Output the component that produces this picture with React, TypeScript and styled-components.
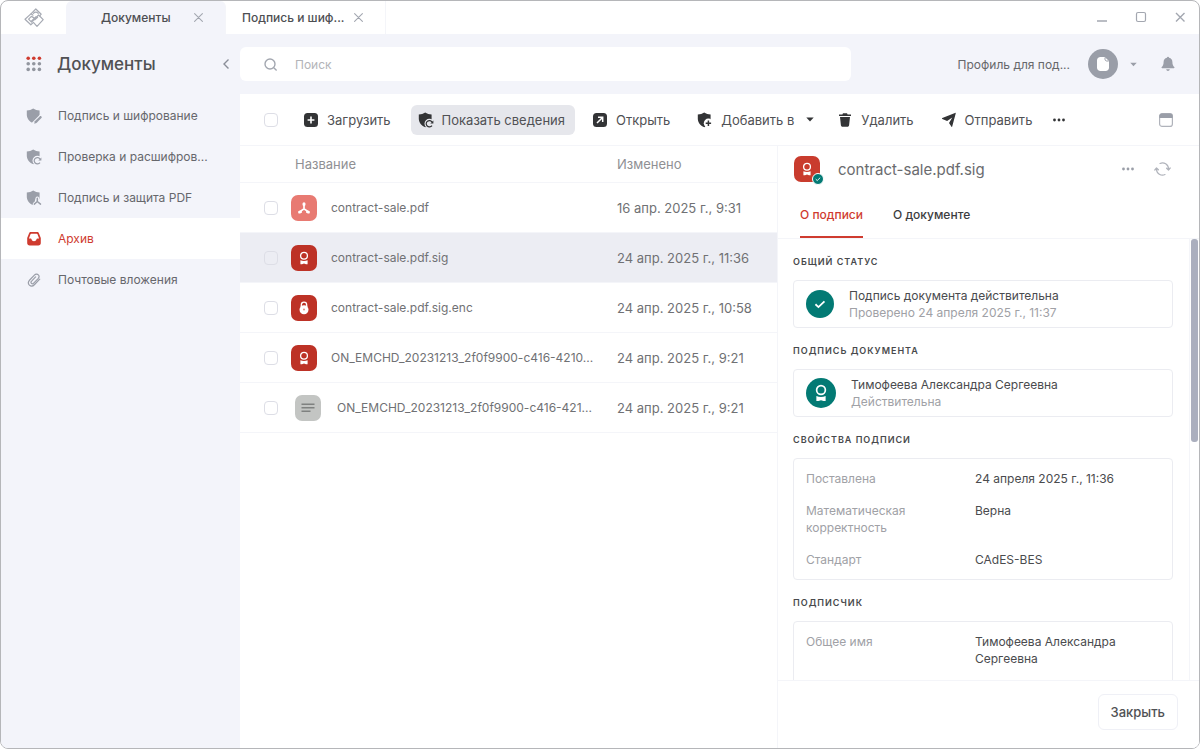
import React, { useState } from "react";
import styled, { createGlobalStyle, css } from "styled-components";

const red = "#cf3b2f";
const teal = "#037a74";
const lav = "#f3f4fa";
const line = "#f4f5f9";

const Global = createGlobalStyle`
  *, *::before, *::after { box-sizing: border-box; }
  body { margin: 0; background: #fff; }
  body, button, input { font-family: Inter, "Liberation Sans", sans-serif; font-size: 12px; }
  button { border: 0; padding: 0; margin: 0; background: none; color: inherit; cursor: pointer; }
  svg { display: block; flex: none; }
`;

const Frame = styled.div`
  display: flex;
  flex-direction: column;
  height: 100vh;
  border: 1px solid #b5b6b9;
  border-radius: 8px;
  background: #fff;
  color: #636466;
  overflow: hidden;
`;

const TitleBar = styled.header`
  display: flex;
  flex: none;
  height: 33px;
`;

const HomeButton = styled.button`
  width: 65px;
  display: grid;
  place-items: center;
  color: #a7abb4;
`;

const WindowTab = styled.div<{ $active?: boolean }>`
  display: flex;
  align-items: center;
  width: 160px;
  padding: 0 22px 0 ${(p) => (p.$active ? 35 : 16)}px;
  border-right: 1px solid ${line};
  border-radius: ${(p) => (p.$active ? "6px 6px 0 0" : "0")};
  background: ${(p) => (p.$active ? lav : "#fff")};
  color: #4d4e52;
`;

const TabTitle = styled.button`
  flex: 1;
  text-align: left;
  white-space: nowrap;
  font-weight: 500;
`;

const PlainButton = styled.button`
  display: grid;
  place-items: center;
  color: #a3a7b0;
`;

const WindowControls = styled.div`
  display: flex;
  align-items: center;
  gap: 27px;
  margin-left: auto;
  padding: 0 13px 2px 0;
`;

const Body = styled.div`
  display: flex;
  flex: 1;
  min-height: 0;
  background: ${lav};
`;

const Sidebar = styled.nav`
  width: 239px;
  flex: none;
`;

const SideHeader = styled.div`
  display: flex;
  align-items: center;
  height: 60px;
  padding: 0 10px 0 25px;
`;

const AppTitle = styled.h1`
  flex: 1;
  margin: 0 0 0 15px;
  font-size: 17px;
  font-weight: 500;
  color: #505154;
`;

const SideList = styled.ul`
  margin: 0;
  padding: 1px 0 0;
  list-style: none;
`;

const SideLink = styled.a<{ $active?: boolean }>`
  display: flex;
  align-items: center;
  gap: 16px;
  height: 41px;
  padding-left: 25px;
  text-decoration: none;
  white-space: nowrap;
  color: ${(p) => (p.$active ? red : "#66676c")};
  background: ${(p) => (p.$active ? "#fff" : "transparent")};
  svg { color: ${(p) => (p.$active ? red : "#9a9ea8")}; }
`;

const Content = styled.div`
  display: flex;
  flex-direction: column;
  flex: 1;
  min-width: 0;
`;

const TopBar = styled.div`
  display: flex;
  align-items: center;
  flex: none;
  height: 60px;
  padding-right: 24px;
`;

const SearchBox = styled.label`
  display: flex;
  align-items: center;
  gap: 14px;
  flex: 1;
  max-width: 611px;
  height: 34px;
  padding-left: 24px;
  border-radius: 6px;
  background: #fff;
  color: #a3a7b0;
`;

const SearchInput = styled.input`
  flex: 1;
  border: 0;
  outline: 0;
  background: none;
  color: #505154;
  &::placeholder { color: #b3b4b8; }
`;

const Profile = styled.button`
  display: flex;
  align-items: center;
  margin-left: auto;
  white-space: nowrap;
  color: #66676a;
`;

const Avatar = styled.span`
  display: grid;
  place-items: center;
  width: 30px;
  height: 30px;
  margin: 0 12px 0 18px;
  border-radius: 50%;
  background: #9a9ea8;
`;

const BellButton = styled(PlainButton)`
  margin-left: 24px;
`;

const Sheet = styled.main`
  display: flex;
  flex-direction: column;
  flex: 1;
  min-height: 0;
  background: #fff;
`;

const Toolbar = styled.div`
  display: flex;
  align-items: center;
  gap: 10px;
  flex: none;
  height: 52px;
  padding: 0 26px 0 24px;
  border-bottom: 1px solid ${line};
`;

const Check = styled.input`
  appearance: none;
  display: block;
  flex: none;
  width: 14px;
  height: 14px;
  margin: 0;
  border: 1px solid #dddee6;
  border-radius: 4px;
  &:checked { background: ${red}; }
`;

const SelectAll = styled(Check)`
  margin-right: 8px;
`;

const ToolButton = styled.button<{ $active?: boolean; $menu?: boolean }>`
  display: flex;
  align-items: center;
  gap: 8px;
  height: 30px;
  padding: 0 ${(p) => (p.$menu ? 6 : 10)}px 0 7px;
  border-radius: 6px;
  white-space: nowrap;
  font-size: 13px;
  color: #505154;
  background: ${(p) => (p.$active ? "#e6e7ec" : "transparent")};
  svg { color: #333436; }
`;

const MenuLabel = styled.span`
  margin-right: 4px;
`;

const LayoutButton = styled(PlainButton)`
  margin-left: auto;
`;

const Split = styled.div`
  display: flex;
  flex: 1;
  min-height: 0;
`;

const FileArea = styled.section`
  flex: 1;
  min-width: 0;
`;

const FileTable = styled.table`
  width: 100%;
  table-layout: fixed;
  border-collapse: separate;
  border-spacing: 0;
  th, td {
    padding: 0;
    text-align: left;
    font-size: 13px;
    font-weight: 400;
    white-space: nowrap;
    border-bottom: 1px solid ${line};
  }
  th { height: 37px; color: #8f9094; }
  td { height: 50px; color: #707174; }
`;

const CheckCol = styled.col`width: 51px;`;
const DateCol = styled.col`width: 160px;`;

const FileRow = styled.tr<{ $selected?: boolean }>`
  background: ${(p) => (p.$selected ? "#ecedf3" : "#fff")};
`;

const CheckCell = styled.td`
  && { padding-left: 24px; }
`;

const NameHead = styled.th`
  && { padding-left: 4px; }
`;

const FileName = styled.div<{ $nested?: boolean }>`
  display: flex;
  align-items: center;
  gap: ${(p) => (p.$nested ? 16 : 14)}px;
  padding-left: ${(p) => (p.$nested ? 4 : 0)}px;
  font-size: 12px;
`;

const Tile = styled.span<{ $tone: string }>`
  position: relative;
  display: grid;
  place-items: center;
  flex: none;
  width: 26px;
  height: 26px;
  border-radius: 7px;
  background: ${(p) => p.$tone};
  color: #fff;
`;

const Panel = styled.aside`
  display: flex;
  flex-direction: column;
  flex: none;
  width: 422px;
  border-left: 1px solid ${line};
`;

const PanelHeader = styled.div`
  display: flex;
  align-items: center;
  height: 46px;
  padding: 0 28px 0 16px;
`;

const PanelTitle = styled.h2`
  flex: 1;
  margin: 0 0 0 18px;
  font-size: 15px;
  font-weight: 400;
  color: #6a6b6e;
`;

const OkBadge = styled.span`
  position: absolute;
  right: -4px;
  bottom: -3px;
  display: grid;
  place-items: center;
  width: 12px;
  height: 12px;
  border: 1px solid #fff;
  border-radius: 50%;
  background: ${teal};
`;

const PanelActions = styled.div`
  display: flex;
  align-items: center;
  gap: 19px;
`;

const PanelTabs = styled.div`
  display: flex;
  gap: 30px;
  height: 47px;
  padding-left: 22px;
  border-bottom: 1px solid ${line};
`;

const PanelTab = styled.button<{ $active?: boolean }>`
  font-weight: 500;
  color: ${(p) => (p.$active ? red : "#3c3d40")};
  border-bottom: 2px solid ${(p) => (p.$active ? red : "transparent")};
`;

const ScrollArea = styled.div`
  display: flex;
  flex: 1;
  min-height: 0;
`;

const Details = styled.div`
  flex: 1;
  padding: 0 16px 0 15px;
  overflow-y: auto;
  scrollbar-width: none;
`;

const Track = styled.div`
  width: 10px;
  padding: 0 1px;
  border-left: 1px solid ${line};
`;

const Thumb = styled.div`
  height: 46%;
  border-radius: 3px;
  background: #abafbe;
`;

const SectionTitle = styled.h3`
  display: flex;
  align-items: center;
  height: 41px;
  margin: 0;
  padding-top: 3px;
  font-size: 9px;
  font-weight: 600;
  letter-spacing: 1px;
  text-transform: uppercase;
  color: #48494c;
`;

const cardFrame = css`
  border: 1px solid #ebecf1;
  border-radius: 4px;
`;

const StatusCard = styled.div`
  display: flex;
  align-items: center;
  gap: 15px;
  height: 48px;
  padding: 0 12px;
  ${cardFrame}
`;

const Seal = styled.span<{ $size: number }>`
  display: grid;
  place-items: center;
  width: ${(p) => p.$size}px;
  height: ${(p) => p.$size}px;
  border-radius: 50%;
  background: ${teal};
  color: #fff;
`;

const StatusText = styled.p`
  margin: 0;
  line-height: 17px;
  color: #4a4b4e;
`;

const Muted = styled.span`
  display: block;
  color: #a0a1a6;
`;

const Properties = styled.dl`
  display: grid;
  grid-template-columns: 154px 1fr;
  gap: 15px;
  align-content: start;
  min-height: 122px;
  margin: 0;
  padding: 11px 12px;
  line-height: 17px;
  ${cardFrame}
  dt { color: #a0a1a6; }
  dd { margin: 0; color: #4a4b4e; }
`;

const PanelFooter = styled.div`
  display: flex;
  justify-content: flex-end;
  flex: none;
  height: 68px;
  padding: 13px 21px 0;
  border-top: 1px solid ${line};
`;

const CloseButton = styled.button`
  height: 36px;
  padding: 0 12px;
  border: 1px solid #eff0f6;
  border-radius: 6px;
  font-size: 13px;
  font-weight: 500;
  color: #505154;
`;

const CloseIcon = () => (
  <svg width="9" height="9" viewBox="0 0 9 9" stroke="currentColor" strokeWidth="1.1" strokeLinecap="round">
    <path d="M.6.6l7.800 7.800M8.400.6.6 8.400" />
  </svg>
);

const LogoIcon = () => (
  <svg width="20" height="20" viewBox="0 0 20 20" fill="none" stroke="currentColor" strokeWidth="1.200" strokeLinejoin="round" strokeLinecap="round">
    <path d="M9 7.200 7.200 5.600 1 11.200l5.800 5.600 2.400-2.200" />
    <path d="M9.600 9.600 7.400 8.400 4.600 11.200l2.400 2.400 5-4.800" />
    <path d="M9.400 14.400l3.600 4 6.200-6.800-4.600-4.600-7 7" />
    <path d="M13.600 9.200l-2.800 2.600" />
    <path d="M7.200 5.600 11.800 1l5.400 5.200-1.400 1.600M9.400 5.400c1.600-1.600 3.400-1.400 4.800 0" />
  </svg>
);

const DotsGrid = () => (
  <svg width="16" height="16" viewBox="0 0 16 16">
    {[2.2, 7.8, 13.4].map((y, r) =>
      [2.2, 7.8, 13.4].map((x) => <circle key={`${x}-${y}`} cx={x} cy={y} r="1.8" fill={r ? "#92969f" : red} />)
    )}
  </svg>
);

const Shield = ({ kind, bg }: { kind: "pen" | "check" | "pdf" | "plus"; bg: string }) => (
  <svg width="16" height="16" viewBox="0 0 16 16" fill="none">
    <path d="M7.200.4c1.900 1.300 4 1.900 6.400 2v4.300c0 3.600-2.500 6.900-6.400 8.500C3.200 13.600.8 10.300.8 6.700V2.400C3.200 2.300 5.400 1.700 7.200.4z" fill="currentColor" />
    {kind === "pen" && (
      <>
        <path d="M16 8 7.500 16.500" stroke={bg} strokeWidth="4.600" />
        <path d="M8.200 15.800l.6-2.500 4.900-4.900c.5-.5 1.200-.5 1.700 0s.5 1.200 0 1.700l-4.900 4.900z" fill="currentColor" />
      </>
    )}
    {kind === "check" && (
      <>
        <circle cx="11.400" cy="11.600" r="4.900" fill={bg} />
        <path d="M14 13.600a3.200 3.200 0 1 1 .2-3.400" stroke="currentColor" strokeWidth="1.200" />
        <path d="M15.400 8.400v3.100h-3.100z" fill="currentColor" />
      </>
    )}
    {kind === "pdf" && (
      <>
        <path d="M11.200 6.500c2 0 2.200 1.800 1.600 3.400 1.600 2 3.200 2.200 3.200 4.600L8 16c-2-.5-1.600-3.300.6-4.300.8-1.500.5-5.200 2.600-5.200z" fill={bg} />
        <path d="M11.300 8.300v3.200M11.300 11.500l-3 2.600M11.300 11.500l3.200 2.600" stroke="currentColor" strokeWidth="1.500" strokeLinecap="round" />
      </>
    )}
    {kind === "plus" && (
      <>
        <circle cx="11.400" cy="11.200" r="4.600" fill={bg} />
        <path d="M11.400 8.500v5.400M8.700 11.200h5.400" stroke="currentColor" strokeWidth="1.500" />
      </>
    )}
  </svg>
);

const InboxIcon = () => (
  <svg width="16" height="16" viewBox="0 0 16 16" fill="none">
    <path d="M5 1h6c1 0 1.600.5 2 1.400L14.800 7v5c0 1.500-1 2.500-2.500 2.500H3.700c-1.500 0-2.500-1-2.500-2.500V7L3 2.400C3.400 1.500 4 1 5 1z" fill="currentColor" />
    <path d="M5.300 2.700h5.400c.4 0 .6.200.8.600l1.600 4.300h-1.500c-.7 0-1 .4-1.200 1-.3 1-1.100 1.700-2.400 1.700s-2.100-.7-2.400-1.700c-.2-.6-.5-1-1.200-1H2.900l1.600-4.300c.2-.4.400-.6.800-.6z" fill="#fff" />
  </svg>
);

const ClipIcon = () => (
  <svg width="16" height="16" viewBox="0 0 16 16" fill="none" stroke="currentColor" strokeWidth="1.200" strokeLinecap="round">
    <path d="M13.700 7.200 8.600 12.500c-1.600 1.700-3.800 1.900-5.200.6-1.400-1.400-1.200-3.500.3-5.100l4.700-4.900c1.200-1.200 2.900-1.300 3.900-.3s.9 2.600-.2 3.800L7.700 11.100c-.7.7-1.700.8-2.300.2s-.5-1.500.2-2.200l4-4.200" />
  </svg>
);

const RibbonIcon = ({ size = 14 }: { size?: number }) => (
  <svg width={size} height={size} viewBox="0 0 14 14" fill="none">
    <circle cx="7" cy="4.700" r="3.400" stroke="currentColor" strokeWidth="1.300" />
    <path d="M3.400 9.300c2.200 1 5 1 7.200 0v4H9L7 12.600l-2 .7H3.400z" fill="currentColor" />
  </svg>
);

const LockIcon = () => (
  <svg width="14" height="14" viewBox="0 0 14 14" fill="none">
    <path d="M4.300 6V3.900a2.700 2.700 0 0 1 5.400 0V6" stroke="currentColor" strokeWidth="1.300" />
    <circle cx="7" cy="8.700" r="4.500" fill="currentColor" />
    <circle cx="7" cy="8.500" r="1" fill="#e0887f" />
  </svg>
);

const PdfIcon = () => (
  <svg width="14" height="14" viewBox="0 0 14 14" fill="none" stroke="currentColor" strokeLinecap="round">
    <path d="M7 3v4.800M7 7.800l-4 2.800M7 7.800l4 2.800" strokeWidth="1.700" />
    <path d="M7 2.700v.8M2.600 11.100l.9-.2M11.400 11.100l-.9-.2" strokeWidth="3" />
  </svg>
);

const TextIcon = () => (
  <svg width="14" height="12" viewBox="0 0 14 12" stroke="#7f8180" strokeWidth="1.500">
    <path d="M.5 2.200h13M.5 5.700h13M.5 9.300h9" />
  </svg>
);

const CheckMark = ({ size }: { size: number }) => (
  <svg width={size} height={size} viewBox="0 0 10 10" fill="none" stroke="#fff" strokeWidth="1.500">
    <path d="M1.200 5.200l2.500 2.400 5-4.800" />
  </svg>
);

const PlusSquare = () => (
  <svg width="16" height="16" viewBox="0 0 16 16">
    <rect x="1" y="1" width="14" height="14" rx="3.500" fill="currentColor" />
    <path d="M8 4.600v6.800M4.600 8h6.800" stroke="#fff" strokeWidth="1.600" />
  </svg>
);

const OpenSquare = () => (
  <svg width="16" height="16" viewBox="0 0 16 16" fill="none">
    <rect x="1" y="1" width="14" height="14" rx="3.500" fill="currentColor" />
    <path d="M5 11l5.500-5.500M6 5.300h4.700V10" stroke="#fff" strokeWidth="1.500" />
  </svg>
);

const TrashIcon = () => (
  <svg width="16" height="16" viewBox="0 0 16 16" fill="currentColor">
    <path d="M6 1.200h4l.6 1.200H14v1.500H2V2.400h3.400zM3 5h10l-.9 8.200c-.1.900-.8 1.500-1.700 1.500H5.600c-.9 0-1.600-.6-1.700-1.500z" />
  </svg>
);

const SendIcon = () => (
  <svg width="16" height="16" viewBox="0 0 16 16" fill="currentColor">
    <path d="M14.700 1.400 11.200 14.600c-.1.400-.5.400-.7.100L8 10.900l3.300-5.300-5.200 3.500L1.300 7c-.5-.2-.4-.7 0-.9L14 .9c.5-.2.900.1.700.5z" />
  </svg>
);

const Caret = ({ size, color }: { size: number; color: string }) => (
  <svg width={size} height="5" viewBox="0 0 8 5"><path d="M.3.500h7.400L4 4.500z" fill={color} /></svg>
);

const MoreIcon = ({ color }: { color: string }) => (
  <svg width="14" height="4" viewBox="0 0 14 4" fill={color}>
    <circle cx="2.500" cy="2" r="1.400" /><circle cx="7" cy="2" r="1.400" /><circle cx="11.500" cy="2" r="1.400" />
  </svg>
);

const BellIcon = () => (
  <svg width="14" height="16" viewBox="0 0 14 16" fill="#9a9ea8">
    <path d="M7 .7c.6 0 1 .4 1.100 1 2.100.5 3.300 2.100 3.300 4.300 0 2.600.7 4 1.900 5.100.4.500.2 1.200-.5 1.200H1.200c-.7 0-.9-.7-.5-1.200C1.900 10 2.600 8.600 2.600 6c0-2.200 1.200-3.800 3.300-4.300.1-.6.5-1 1.100-1zM5.200 13.300h3.600c-.2 1-.9 1.600-1.800 1.600s-1.600-.6-1.800-1.600z" />
  </svg>
);

const RefreshIcon = () => (
  <svg width="17" height="16" viewBox="0 0 17 16" fill="none" stroke="#b0b3bb" strokeWidth="1.200" strokeLinecap="round" strokeLinejoin="round">
    <path d="M6 2.500a6 6 0 0 1 8.500 5.300v1M16.200 7l-1.700 2-1.900-1.800" />
    <path d="M11 13.500A6 6 0 0 1 2.500 8.200v-1M.8 9l1.700-2 1.900 1.800" />
  </svg>
);

const sideItems = [
  { label: "Подпись и шифрование", icon: <Shield kind="pen" bg={lav} /> },
  { label: "Проверка и расшифров...", icon: <Shield kind="check" bg={lav} /> },
  { label: "Подпись и защита PDF", icon: <Shield kind="pdf" bg={lav} /> },
  { label: "Архив", icon: <InboxIcon />, active: true },
  { label: "Почтовые вложения", icon: <ClipIcon /> },
];

const files = [
  { name: "contract-sale.pdf", date: "16 апр. 2025 г., 9:31", tone: "#e87a72", icon: <PdfIcon /> },
  { name: "contract-sale.pdf.sig", date: "24 апр. 2025 г., 11:36", tone: "#bd3226", icon: <RibbonIcon />, selected: true },
  { name: "contract-sale.pdf.sig.enc", date: "24 апр. 2025 г., 10:58", tone: "#bd3226", icon: <LockIcon /> },
  { name: "ON_EMCHD_20231213_2f0f9900-c416-4210...", date: "24 апр. 2025 г., 9:21", tone: "#bd3226", icon: <RibbonIcon /> },
  { name: "ON_EMCHD_20231213_2f0f9900-c416-421...", date: "24 апр. 2025 г., 9:21", tone: "#c3c5c3", icon: <TextIcon />, nested: true },
];

const panelTabs = ["О подписи", "О документе"];

export default function App() {
  const [tab, setTab] = useState(0);
  return (
    <Frame>
      <Global />
      <TitleBar>
        <HomeButton aria-label="Главная"><LogoIcon /></HomeButton>
        <WindowTab $active>
          <TabTitle>Документы</TabTitle>
          <PlainButton aria-label="Закрыть вкладку"><CloseIcon /></PlainButton>
        </WindowTab>
        <WindowTab>
          <TabTitle>Подпись и шиф...</TabTitle>
          <PlainButton aria-label="Закрыть вкладку"><CloseIcon /></PlainButton>
        </WindowTab>
        <WindowControls>
          <PlainButton aria-label="Свернуть">
            <svg width="12" height="12" viewBox="0 0 12 12" stroke="currentColor" strokeWidth="1.500"><path d="M1 10h10" /></svg>
          </PlainButton>
          <PlainButton aria-label="Развернуть">
            <svg width="12" height="12" viewBox="0 0 12 12" fill="none" stroke="currentColor" strokeWidth="1.200"><rect x="1.500" y="1.500" width="9" height="9" rx="1.500" /></svg>
          </PlainButton>
          <PlainButton aria-label="Закрыть окно">
            <svg width="12" height="12" viewBox="0 0 12 12" stroke="currentColor" strokeWidth="1.400"><path d="M2 2l8.500 8.500M10.500 2L2 10.500" /></svg>
          </PlainButton>
        </WindowControls>
      </TitleBar>

      <Body>
        <Sidebar>
          <SideHeader>
            <DotsGrid />
            <AppTitle>Документы</AppTitle>
            <PlainButton aria-label="Свернуть меню">
              <svg width="8" height="12" viewBox="0 0 8 12" fill="none" stroke="#8a8e98" strokeWidth="1.400"><path d="M6.500 1.500 2 6l4.500 4.500" /></svg>
            </PlainButton>
          </SideHeader>
          <SideList>
            {sideItems.map((it) => (
              <li key={it.label}>
                <SideLink href="#" $active={it.active}>{it.icon}{it.label}</SideLink>
              </li>
            ))}
          </SideList>
        </Sidebar>

        <Content>
          <TopBar>
            <SearchBox>
              <svg width="15" height="15" viewBox="0 0 15 15" fill="none" stroke="currentColor" strokeWidth="1.400">
                <circle cx="6" cy="7" r="5" /><path d="M9.800 10.800l2.800 2.600" />
              </svg>
              <SearchInput type="search" placeholder="Поиск" aria-label="Поиск" />
            </SearchBox>
            <Profile>
              Профиль для под...
              <Avatar>
                <svg width="14" height="16" viewBox="0 0 14 16">
                  <path d="M4.500 1h4.200L13 5v6.500c0 2-1.400 3.500-3.500 3.500h-5C2.400 15 1 13.500 1 11.500v-7C1 2.400 2.400 1 4.500 1z" fill="#fff" />
                  <path d="M9 1.500v1.700C9 4.200 9.700 5 10.700 5h2" fill="none" stroke="#9a9ea8" />
                </svg>
              </Avatar>
              <Caret size={7} color="#9a9ea8" />
            </Profile>
            <BellButton aria-label="Уведомления"><BellIcon /></BellButton>
          </TopBar>

          <Sheet>
            <Toolbar>
              <SelectAll type="checkbox" aria-label="Выбрать все" />
              <ToolButton><PlusSquare />Загрузить</ToolButton>
              <ToolButton $active><Shield kind="check" bg="#e6e7ec" />Показать сведения</ToolButton>
              <ToolButton><OpenSquare />Открыть</ToolButton>
              <ToolButton $menu><Shield kind="plus" bg="#fff" /><MenuLabel>Добавить в</MenuLabel><Caret size={8} color="#333436" /></ToolButton>
              <ToolButton><TrashIcon />Удалить</ToolButton>
              <ToolButton><SendIcon />Отправить</ToolButton>
              <PlainButton aria-label="Ещё"><MoreIcon color="#333436" /></PlainButton>
              <LayoutButton aria-label="Вид">
                <svg width="14" height="14" viewBox="0 0 14 14" fill="none">
                  <rect x=".6" y=".6" width="12.800" height="12.800" rx="2.500" stroke="#b0b3bb" strokeWidth="1.200" />
                  <path d="M.4 5V3A2.600 2.600 0 0 1 3 .4h8A2.600 2.600 0 0 1 13.600 3v2z" fill="#9a9ea8" />
                </svg>
              </LayoutButton>
            </Toolbar>

            <Split>
              <FileArea>
                <FileTable>
                  <colgroup><CheckCol /><col /><DateCol /></colgroup>
                  <thead>
                    <tr><th aria-label="Выбор" /><NameHead>Название</NameHead><th>Изменено</th></tr>
                  </thead>
                  <tbody>
                    {files.map((f, i) => (
                      <FileRow key={i} $selected={f.selected}>
                        <CheckCell><Check type="checkbox" aria-label={f.name} /></CheckCell>
                        <td><FileName $nested={f.nested}><Tile $tone={f.tone}>{f.icon}</Tile>{f.name}</FileName></td>
                        <td>{f.date}</td>
                      </FileRow>
                    ))}
                  </tbody>
                </FileTable>
              </FileArea>

              <Panel>
                <PanelHeader>
                  <Tile $tone="#c93c2e">
                    <RibbonIcon />
                    <OkBadge><CheckMark size={6} /></OkBadge>
                  </Tile>
                  <PanelTitle>contract-sale.pdf.sig</PanelTitle>
                  <PanelActions>
                    <PlainButton aria-label="Действия"><MoreIcon color="#9a9ea8" /></PlainButton>
                    <PlainButton aria-label="Обновить"><RefreshIcon /></PlainButton>
                  </PanelActions>
                </PanelHeader>
                <PanelTabs>
                  {panelTabs.map((t, i) => (
                    <PanelTab key={t} $active={tab === i} onClick={() => setTab(i)}>{t}</PanelTab>
                  ))}
                </PanelTabs>
                <ScrollArea>
                  <Details>
                    <SectionTitle>Общий статус</SectionTitle>
                    <StatusCard>
                      <Seal $size={28}><CheckMark size={12} /></Seal>
                      <StatusText>Подпись документа действительна<Muted>Проверено 24 апреля 2025 г., 11:37</Muted></StatusText>
                    </StatusCard>
                    <SectionTitle>Подпись документа</SectionTitle>
                    <StatusCard>
                      <Seal $size={30}><RibbonIcon size={18} /></Seal>
                      <StatusText>Тимофеева Александра Сергеевна<Muted>Действительна</Muted></StatusText>
                    </StatusCard>
                    <SectionTitle>Свойства подписи</SectionTitle>
                    <Properties>
                      <dt>Поставлена</dt><dd>24 апреля 2025 г., 11:36</dd>
                      <dt>Математическая корректность</dt><dd>Верна</dd>
                      <dt>Стандарт</dt><dd>CAdES-BES</dd>
                    </Properties>
                    <SectionTitle>Подписчик</SectionTitle>
                    <Properties>
                      <dt>Общее имя</dt><dd>Тимофеева Александра Сергеевна</dd>
                    </Properties>
                  </Details>
                  <Track><Thumb /></Track>
                </ScrollArea>
                <PanelFooter><CloseButton>Закрыть</CloseButton></PanelFooter>
              </Panel>
            </Split>
          </Sheet>
        </Content>
      </Body>
    </Frame>
  );
}
